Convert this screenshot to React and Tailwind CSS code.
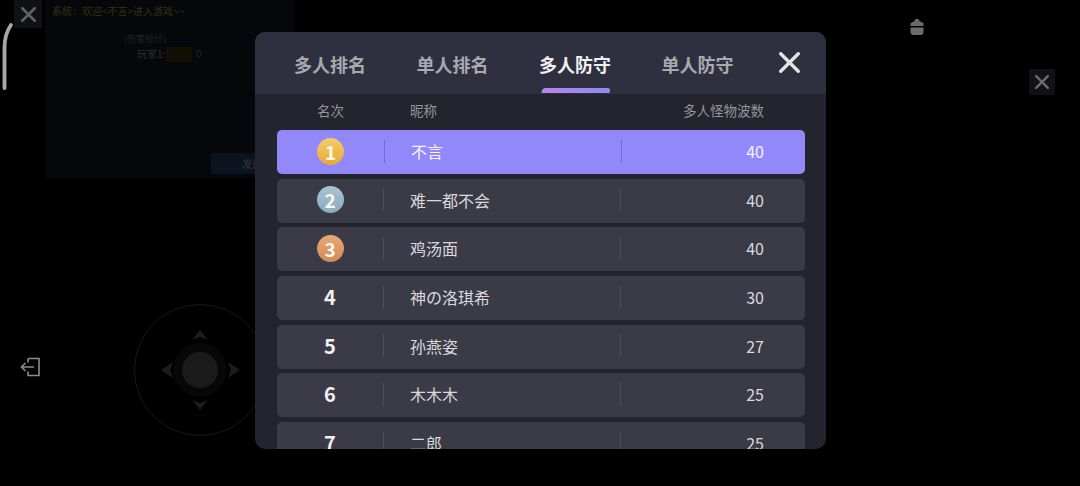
const FONT = "font-['Noto_Sans_CJK_SC','Noto_Sans',sans-serif]";

const rows = [
  { rank: 1, name: "不言", score: 40, medal: "bg-gradient-to-b from-[#f3cd68] to-[#e5aa34]" },
  { rank: 2, name: "难一都不会", score: 40, medal: "bg-gradient-to-b from-[#a9c4d4] to-[#8aabbf]" },
  { rank: 3, name: "鸡汤面", score: 40, medal: "bg-gradient-to-b from-[#e6a878] to-[#d48a54]" },
  { rank: 4, name: "神の洛琪希", score: 30 },
  { rank: 5, name: "孙燕姿", score: 27 },
  { rank: 6, name: "木木木", score: 25 },
  { rank: 7, name: "二郎", score: 25 },
];

function Cross({ className, width = 3.6 }) {
  return (
    <svg viewBox="0 0 24 24" className={className} fill="none" stroke="currentColor" strokeLinecap="round">
      <path d="M2 2 L22 22 M22 2 L2 22" strokeWidth={width} />
    </svg>
  );
}

function Row({ row, active }) {
  return (
    <div
      className={`flex items-center shrink-0 h-[44px] rounded-[5px] pb-[2px] ${
        active ? "bg-[#9288fb] text-[#f5f4ff]" : "bg-[#3a3b47] text-[#d9d9dd]"
      }`}
    >
      <div className={`flex justify-center shrink-0 ${active ? "w-[107px]" : "w-[106px]"}`}>
        {row.medal ? (
          <div className={`w-[27px] h-[27px] rounded-full flex items-center justify-center text-[19px] leading-none font-bold text-[#fdf8ec] ${row.medal}`}>
            {row.rank}
          </div>
        ) : (
          <div className="w-[107px] text-center text-[20px] leading-none font-bold text-[#f0f0f3]">{row.rank}</div>
        )}
      </div>
      <div className={`w-px h-[23px] shrink-0 ${active ? "bg-[#7169d4]" : "bg-[#4c4d59]"}`} />
      <div className="ml-[26px] w-[210px] text-[16px] leading-none shrink-0 whitespace-nowrap">{row.name}</div>
      <div className={`w-px h-[23px] shrink-0 ${active ? "bg-[#7169d4]" : "bg-[#4c4d59]"}`} />
      <div className="flex-1 pr-[41px] text-right text-[16px] leading-none">{row.score}</div>
    </div>
  );
}

export default function App() {
  const tabs = ["多人排名", "单人排名", "多人防守", "单人防守"];
  return (
    <div className={`relative w-[1080px] h-[486px] overflow-hidden bg-black ${FONT}`}>
      {/* dimmed game HUD on the free canvas */}
      <div className="absolute left-[45px] top-0 w-[250px] h-[178px] bg-[#05070a]">
        <div className="absolute left-[7px] top-[4px] text-[10px] leading-[14px] whitespace-nowrap text-[#37310f]">系统：欢迎&lt;不言&gt;进入游戏~~</div>
        <div className="absolute left-[79px] top-[32px] text-[9px] leading-[13px] whitespace-nowrap text-[#232426]">(伤害统计)</div>
        <div className="absolute left-[92px] top-[47px] text-[10px] leading-[14px] whitespace-nowrap text-[#2b2c2e]">玩家1:</div>
        <div className="absolute left-[121px] top-[47px] w-[26px] h-[15px] bg-[#120f05]" />
        <div className="absolute left-[151px] top-[47px] text-[10px] leading-[14px] text-[#232426]">0</div>
        <div className="absolute left-[166px] top-[153px] w-[50px] h-[21px] bg-[#0c1320] text-[10px] leading-[21px] pl-[31px] whitespace-nowrap text-[#35383d]">发送</div>
      </div>

      <div className="absolute left-[14px] top-0 w-[28px] h-[28px] bg-[#101113] flex items-center justify-center text-[#626365]">
        <Cross className="w-[15px] h-[15px]" width={4} />
      </div>

      <svg className="absolute left-0 top-[20px] w-[16px] h-[74px]" viewBox="0 0 16 74" fill="none">
        <path d="M11 5 C6 12 4.5 18 4.5 28 L4.5 68" stroke="#a8a8a8" strokeWidth="3.8" strokeLinecap="round" />
      </svg>

      <svg className="absolute left-[19px] top-[355px] w-[22px] h-[24px]" viewBox="0 0 22 24" fill="none" stroke="#8c8c8c" strokeWidth="1.6">
        <path d="M9 3.5 H20 V20.5 H9 V16.5 M9 7.5 V3.5" />
        <path d="M15 12 H2.5 M6.5 8 L2.5 12 L6.5 16" />
      </svg>

      <svg className="absolute left-[133px] top-[303px] w-[134px] h-[134px]" viewBox="0 0 134 134" fill="none">
        <circle cx="67" cy="67" r="65.5" stroke="#181818" strokeWidth="1" />
        <circle cx="67" cy="67" r="27" fill="#070707" />
        <circle cx="67" cy="67" r="18" fill="#1a1a1b" />
        <path d="M59 37 L67 27 L75 37 L67 34 Z" fill="#1c1c1c" />
        <path d="M59 97 L67 107 L75 97 L67 100 Z" fill="#1c1c1c" />
        <path d="M40 59 L28 67 L40 75 L37 67 Z" fill="#1c1c1c" />
        <path d="M95 59 L107 67 L95 75 L98 67 Z" fill="#1c1c1c" />
      </svg>

      <svg className="absolute left-[908px] top-[18px] w-[18px] h-[18px]" viewBox="0 0 18 18" fill="#6b6b6b">
        <path d="M6.5 3.2 A2.5 2.5 0 0 1 11.5 3.2 L15.5 5 V8 H2.5 V5 Z" />
        <path d="M2.5 9.5 H15.5 V14 A3 3 0 0 1 12.5 17 H5.5 A3 3 0 0 1 2.5 14 Z" />
      </svg>

      <div className="absolute left-[1029px] top-[69px] w-[26px] h-[26px] bg-[#111213] flex items-center justify-center text-[#6c6d6e]">
        <Cross className="w-[14px] h-[14px]" width={4} />
      </div>

      {/* modal */}
      <div className="absolute left-[255px] top-[32px] w-[571px] h-[417px] rounded-[10px] overflow-hidden bg-[#23242e] flex flex-col">
        <div className="relative shrink-0 h-[62px] bg-[#2f303f] flex pl-[39px]">
          {tabs.map((t, i) => (
            <div
              key={t}
              className={`relative w-[122.5px] shrink-0 pt-[17px] text-[18px] leading-[30px] font-bold whitespace-nowrap ${
                i === 2 ? "text-[#f0f0f2]" : "text-[#a9a9ae]"
              }`}
            >
              {t}
              {i === 2 && (
                <div className="absolute left-[3px] top-[56px] w-[68px] h-[5px] rounded-t-[3px] -skew-x-12 bg-gradient-to-r from-[#b585ee] to-[#8f87f5]" />
              )}
            </div>
          ))}
          <div className="absolute right-[26px] top-[20px] text-[#e4e4e6]">
            <Cross className="w-[21px] h-[21px]" width={3.8} />
          </div>
        </div>

        <div className="shrink-0 h-[36px] pb-[2px] flex items-center text-[13.5px] leading-none text-[#96969c]">
          <div className="ml-[62px] w-[93px]">名次</div>
          <div className="w-[100px]">昵称</div>
          <div className="flex-1 text-right pr-[62px]">多人怪物波数</div>
        </div>

        <div className="flex flex-col gap-[4.7px] pl-[22px] pr-[21px]">
          {rows.map((r, i) => (
            <Row key={r.rank} row={r} active={i === 0} />
          ))}
        </div>
      </div>
    </div>
  );
}
